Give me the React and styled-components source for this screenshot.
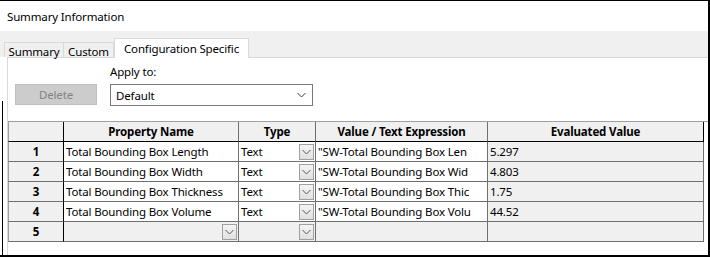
import styled, { createGlobalStyle } from "styled-components";

const GlobalStyle = createGlobalStyle`
  html, body {
    margin: 0;
    padding: 0;
    background: #ffffff;
  }
  body {
    font-family: "Segoe UI", "Noto Sans", "Liberation Sans", sans-serif;
    font-size: 11.5px;
    letter-spacing: -0.15px;
    color: #000;
  }
`;

const Frame = styled.div`
  width: 710px;
  height: 257px;
  box-sizing: border-box;
  border-top: 1px solid #000;
  border-right: 2px solid #000;
  border-bottom: 2px solid #000;
  background: #fff;
  display: flex;
  flex-direction: column;
  overflow: hidden;
  position: relative;

  &::before {
    content: "";
    position: absolute;
    left: 2px;
    top: 100px;
    bottom: 0;
    width: 1px;
    background: #000;
  }
`;

const TitleBar = styled.div`
  height: 30px;
  padding-left: 7px;
  display: flex;
  align-items: center;
  flex-shrink: 0;
`;

const TabStrip = styled.div`
  height: 26px;
  background: #f0f0f0;
  display: flex;
  align-items: flex-end;
  padding-left: 4px;
  flex-shrink: 0;
`;

const Tab = styled.div`
  width: ${(p) => p.w}px;
  height: ${(p) => (p.active ? "20px" : "15px")};
  display: flex;
  align-items: center;
  justify-content: center;
  box-sizing: border-box;
  border: 1px solid #d9d9d9;
  border-bottom: none;
  border-left: ${(p) => (p.first || p.active ? "1px solid #d9d9d9" : "none")};
  background: ${(p) => (p.active ? "#fff" : "#f0f0f0")};
  margin-bottom: ${(p) => (p.active ? "-1px" : "0")};
  position: relative;
  z-index: ${(p) => (p.active ? 1 : 0)};
  padding-top: ${(p) => (p.active ? "0" : "2px")};
`;

const Panel = styled.div`
  flex: 1;
  margin-left: 7px;
  border-left: 1px solid #d9d9d9;
  border-top: 1px solid #d9d9d9;
  display: flex;
  flex-direction: column;
`;

const Controls = styled.div`
  display: flex;
  align-items: flex-end;
  gap: 13px;
  padding: 7px 0 0 7px;
  height: 48px;
  box-sizing: border-box;
`;

const DeleteButton = styled.button`
  width: 82px;
  height: 21px;
  margin-bottom: 1px;
  background: #cccccc;
  border: 1px solid #bfbfbf;
  color: #838383;
  font: inherit;
  letter-spacing: inherit;
  padding: 0;
`;

const Field = styled.div`
  display: flex;
  flex-direction: column;
  gap: 5px;
`;

const Label = styled.div`
  line-height: 14px;
`;

const Combo = styled.div`
  width: 203px;
  height: 22px;
  box-sizing: border-box;
  border: 1px solid #7a7a7a;
  display: flex;
  align-items: center;
  justify-content: space-between;
  padding: 0 6px 0 5px;
  background: #fff;
`;

const GridArea = styled.div`
  margin-top: 15px;
  border-top: 1px solid #a0a0a0;
`;

const Grid = styled.div`
  display: grid;
  grid-template-columns: 56px 175px 77px 172px 216px;
  grid-auto-rows: 20px;
  width: 696px;
`;

const HeadCell = styled.div`
  background: #f0f0f0;
  border-right: 1px solid ${(p) => (p.dark ? "#000" : "#6f6f6f")};
  border-bottom: 1px solid #000;
  ${(p) => p.first && "border-left: 1px solid #a0a0a0;"}
  font-weight: bold;
  display: flex;
  align-items: center;
  justify-content: center;
  box-sizing: border-box;
`;

const RowNum = styled.div`
  background: #f0f0f0;
  border-left: 1px solid #a0a0a0;
  border-right: 1px solid #000;
  border-bottom: 1px solid #6f6f6f;
  font-weight: bold;
  display: flex;
  align-items: center;
  justify-content: center;
  box-sizing: border-box;
`;

const Cell = styled.div`
  background: ${(p) => (p.gray ? "#f0f0f0" : "#fff")};
  border-right: 1px solid #6f6f6f;
  border-bottom: 1px solid #6f6f6f;
  display: flex;
  align-items: center;
  justify-content: space-between;
  padding: 0 1px 0 2px;
  box-sizing: border-box;
  white-space: nowrap;
  overflow: hidden;
`;

const DropButton = styled.div`
  width: 15px;
  height: 16px;
  box-sizing: border-box;
  border: 1px solid #a0a0a0;
  background: linear-gradient(#f4f4f4, #e0e0e0);
  display: flex;
  align-items: center;
  justify-content: center;
  flex-shrink: 0;
`;

const Chevron = ({ color = "#555" }) => (
  <svg width="9" height="6" viewBox="0 0 9 6">
    <path d="M0.5 1 L4.5 5 L8.5 1" fill="none" stroke={color} strokeWidth="1" />
  </svg>
);

const rows = [
  ["Total Bounding Box Length", "\"SW-Total Bounding Box Len", "5.297"],
  ["Total Bounding Box Width", "\"SW-Total Bounding Box Wid", "4.803"],
  ["Total Bounding Box Thickness", "\"SW-Total Bounding Box Thic", "1.75"],
  ["Total Bounding Box Volume", "\"SW-Total Bounding Box Volu", "44.52"],
];

const Dropdown = () => (
  <DropButton>
    <Chevron />
  </DropButton>
);

export default function App() {
  return (
    <>
      <GlobalStyle />
      <Frame>
        <TitleBar>Summary Information</TitleBar>
        <TabStrip>
          <Tab first w={60}>Summary</Tab>
          <Tab w={50}>Custom</Tab>
          <Tab active w={135}>Configuration Specific</Tab>
        </TabStrip>
        <Panel>
          <Controls>
            <DeleteButton>Delete</DeleteButton>
            <Field>
              <Label>Apply to:</Label>
              <Combo>
                <span>Default</span>
                <Chevron color="#404040" />
              </Combo>
            </Field>
          </Controls>
          <GridArea>
            <Grid>
              <HeadCell first dark />
              <HeadCell>Property Name</HeadCell>
              <HeadCell>Type</HeadCell>
              <HeadCell>Value / Text Expression</HeadCell>
              <HeadCell dark>Evaluated Value</HeadCell>
              {rows.map(([name, expr, val], i) => [
                <RowNum key={`n${i}`}>{i + 1}</RowNum>,
                <Cell key={`p${i}`}>{name}</Cell>,
                <Cell key={`t${i}`}>
                  <span>Text</span>
                  <Dropdown />
                </Cell>,
                <Cell key={`v${i}`}>{expr}</Cell>,
                <Cell key={`e${i}`} gray>
                  {val}
                </Cell>,
              ])}
              <RowNum>5</RowNum>
              <Cell gray>
                <span />
                <Dropdown />
              </Cell>
              <Cell gray>
                <span />
                <Dropdown />
              </Cell>
              <Cell gray />
              <Cell gray />
            </Grid>
          </GridArea>
        </Panel>
      </Frame>
    </>
  );
}
